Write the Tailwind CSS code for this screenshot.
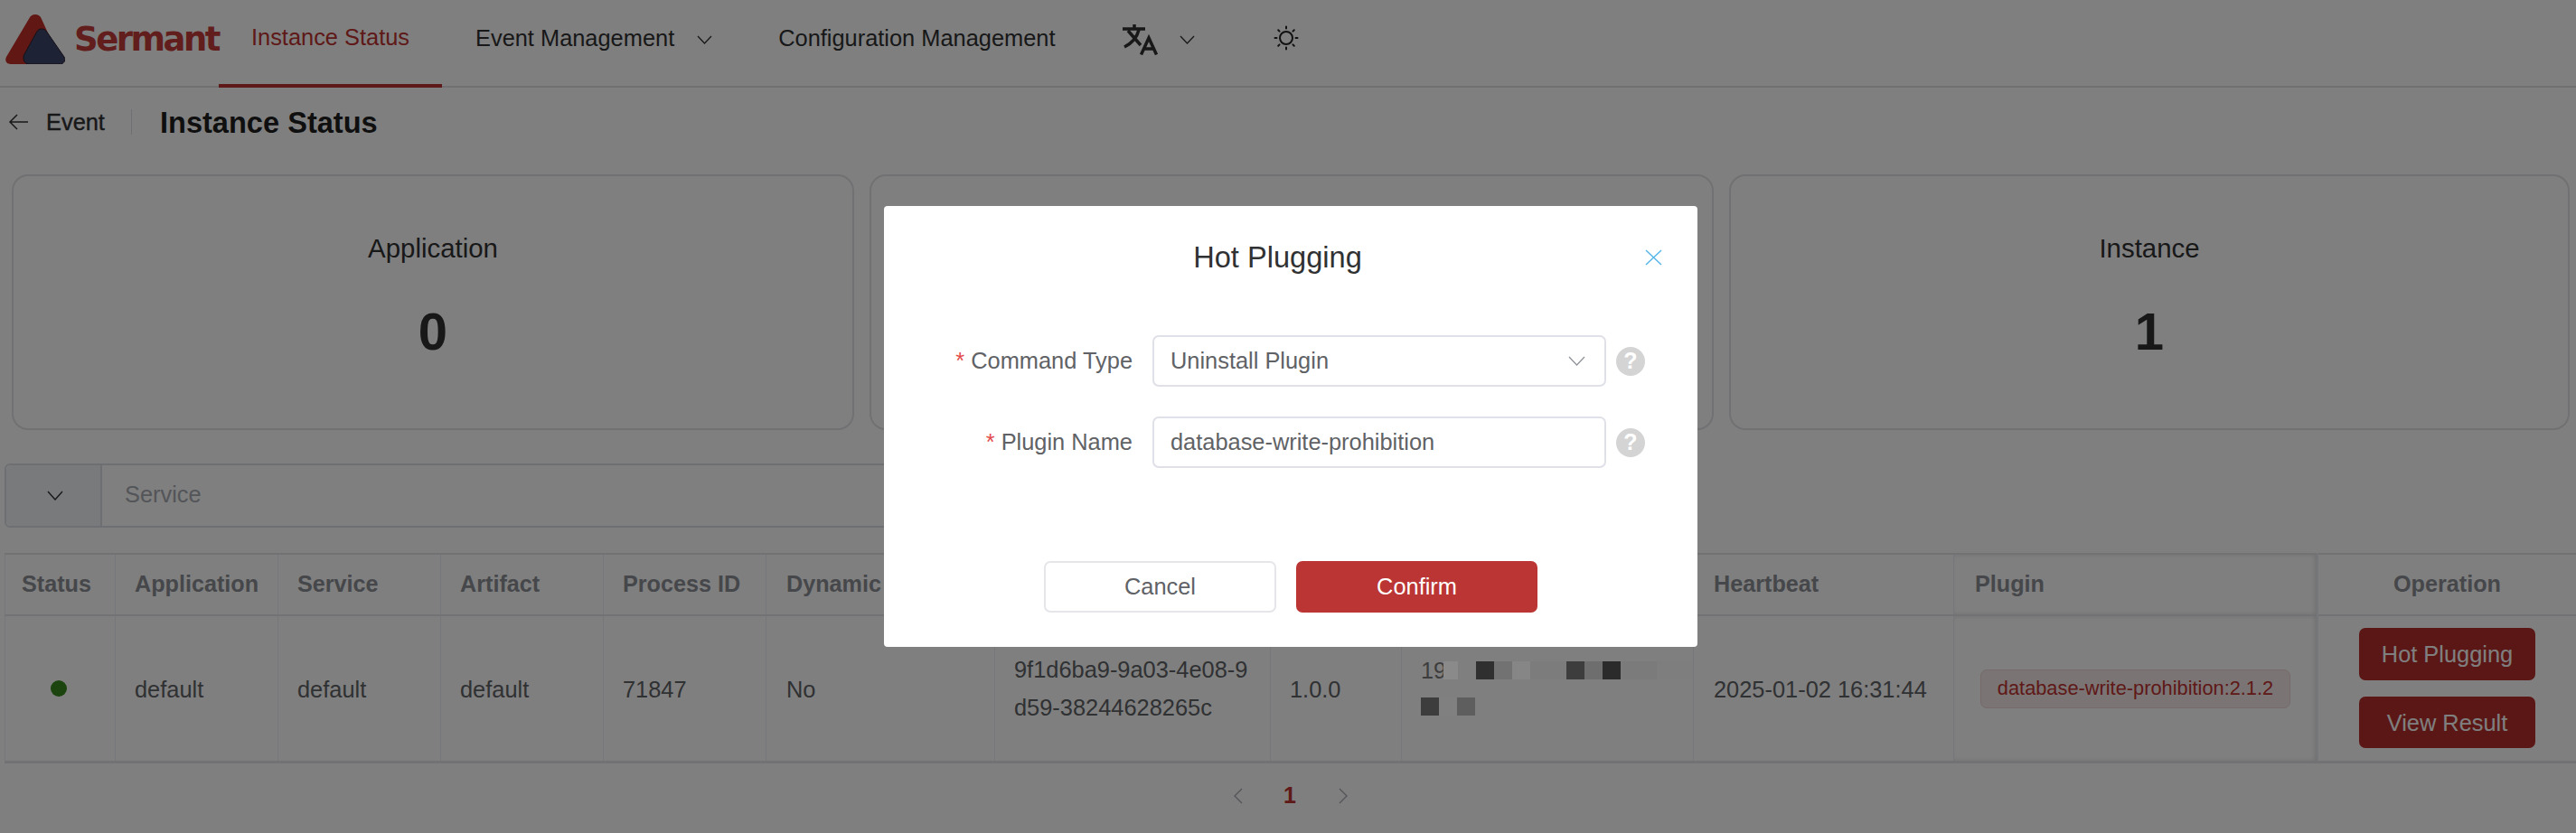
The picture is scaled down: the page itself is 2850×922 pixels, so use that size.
<!DOCTYPE html>
<html lang="en">
<head>
<meta charset="utf-8">
<title>Sermant</title>
<script src="https://cdn.jsdelivr.net/npm/@tailwindcss/browser@4"></script>
</head>
<body class="bg-white font-['Liberation_Sans',Arial,sans-serif] text-[25.4px] text-[#303133] overflow-hidden">
<div class="relative w-[2850px] h-[922px] overflow-hidden">

  <!-- Top navigation -->
  <header class="flex items-stretch h-[97px] border-b-2 border-[#e0e0e6]">
    <div class="flex w-[242px] shrink-0 pl-[6px] pt-[16px] gap-[10px]">
      <svg class="w-[66px] h-[55px] shrink-0" viewBox="0 0 66 55">
        <path d="M33 0c-3 0-5 1.500-6.500 4L1 47c-2 4 0 8 5 8h28L50 27 39.500 4C38 1.500 36 0 33 0z" fill="#c22f28"/>
        <path d="M40 16c-2.500 0-4 1-5.500 3.500L21 44c-2.500 4-.5 11 5 11h34c5 0 7-4.500 5-8L46 19.500C44.500 17 42.500 16 40 16z" fill="#3a4468" stroke="#2a1f30" stroke-width="1"/>
      </svg>
      <span class="font-['DejaVu_Sans',sans-serif] font-bold text-[#c43c38] text-[37px] leading-[44px] mt-[6px] tracking-[-2.5px] whitespace-nowrap">Sermant</span>
    </div>
    <div class="relative flex items-center justify-center w-[247px] shrink-0 text-[#bd3330] border-b-[4px] border-[#bd3330] mb-[-2px] pb-[10px]">Instance Status</div>
    <div class="flex items-center ml-[37px] pb-[10px] whitespace-nowrap">Event Management
      <svg class="w-[17px] h-[10px] ml-[25px] mt-[2px]" viewBox="0 0 17 10" fill="none" stroke="#303133" stroke-width="1.300"><path d="M1 1l7.500 8L16 1"/></svg>
    </div>
    <div class="flex items-center ml-[73px] pb-[10px] whitespace-nowrap">Configuration Management</div>
    <div class="flex items-center ml-[75px] pb-[10px]">
      <svg class="w-[39px] h-[34px] mt-[2px]" viewBox="0 0 39 34" fill="none" stroke="#303133" stroke-width="3.500">
        <path d="M0 5H25M13 0v5M6 7L20 23M18 6C16 14 10 21 2 25"/>
        <path d="M20.500 33.500L29 15l8.500 18.500M23.500 27h11"/>
      </svg>
      <svg class="w-[17px] h-[10px] ml-[24px] mt-[2px]" viewBox="0 0 17 10" fill="none" stroke="#303133" stroke-width="1.300"><path d="M1 1l7.500 8L16 1"/></svg>
    </div>
    <div class="flex items-center ml-[87px] pb-[12px]">
      <svg class="w-[28px] h-[28px]" viewBox="0 0 28 28" fill="none" stroke="#222" stroke-width="2" stroke-linecap="round">
        <circle cx="14" cy="14" r="7"/>
        <path d="M14 1.500v2M14 24.500v2M1.500 14h2M24.500 14h2M5.200 5.200l1.400 1.400M21.400 21.400l1.400 1.400M22.800 5.200l-1.400 1.400M6.600 21.400l-1.400 1.400"/>
      </svg>
    </div>
  </header>

  <!-- Breadcrumb -->
  <div class="flex items-center h-[76px] pl-[9px]">
    <svg class="w-[22px] h-[18px] shrink-0" viewBox="0 0 22 18" fill="none" stroke="#303133" stroke-width="1.500"><path d="M10 1L2 9l8 8M2 9h20"/></svg>
    <span class="ml-[20px] [-webkit-text-stroke:0.4px_#303133]">Event</span>
    <span class="w-px h-[28px] bg-[#dcdfe6] ml-[29px]"></span>
    <span class="ml-[31px] mt-[2px] font-bold text-[32.6px] text-[#1f1f1f]">Instance Status</span>
  </div>

  <!-- Summary cards -->
  <div class="grid grid-cols-[932px_934px_930px] gap-x-[17px] ml-[13px] mt-[20px]">
    <div class="h-[283px] border-2 border-[#e2e2e6] rounded-[18px] flex flex-col items-center pt-[63px]">
      <div class="text-[29.4px] leading-[34px]">Application</div>
      <div class="mt-[42px] text-[58px] leading-[66px] font-bold">0</div>
    </div>
    <div class="h-[283px] border-2 border-[#e2e2e6] rounded-[18px]"></div>
    <div class="h-[283px] border-2 border-[#e2e2e6] rounded-[18px] flex flex-col items-center pt-[63px]">
      <div class="text-[29.4px] leading-[34px]">Instance</div>
      <div class="mt-[42px] text-[58px] leading-[66px] font-bold">1</div>
    </div>
  </div>

  <!-- Search bar -->
  <div class="flex h-[71px] w-[1400px] ml-[5px] mt-[37px] border-2 border-[#dcdfe6] rounded-[6px]">
    <div class="flex items-center justify-center w-[106px] bg-[#f0f4f9] border-r-2 border-[#dcdfe6] rounded-l-[6px] pl-[4px]">
      <svg class="w-[18px] h-[11px]" viewBox="0 0 18 11" fill="none" stroke="#303133" stroke-width="1.400"><path d="M1 1l8 9 8-9"/></svg>
    </div>
    <div class="flex items-center pl-[25px] pb-[2px] text-[#a8abb2]">Service</div>
  </div>

  <!-- Table -->
  <table class="table-fixed w-[2845px] ml-[5px] mt-[28px] border-collapse text-[#606266]">
    <colgroup>
      <col class="w-[122px]"><col class="w-[180px]"><col class="w-[180px]"><col class="w-[180px]"><col class="w-[180px]"><col class="w-[253px]"><col class="w-[305px]"><col class="w-[145px]"><col class="w-[323px]"><col class="w-[288px]"><col class="w-[402px]"><col class="w-[287px]">
    </colgroup>
    <thead>
      <tr class="h-[68px] border-t-2 border-b-2 border-[#e4e4ea] text-left font-bold text-[25.2px] text-[#8c8f95]">
        <th class="pl-[18px] border-x border-[#ebeef5]">Status</th>
        <th class="pl-[21px] border-r border-[#ebeef5]">Application</th>
        <th class="pl-[21px] border-r border-[#ebeef5]">Service</th>
        <th class="pl-[21px] border-r border-[#ebeef5]">Artifact</th>
        <th class="pl-[21px] border-r border-[#ebeef5]">Process ID</th>
        <th class="pl-[22px] border-r border-[#ebeef5]">Dynamic</th>
        <th class="border-r border-[#ebeef5]"></th>
        <th class="border-r border-[#ebeef5]"></th>
        <th class="border-r border-[#ebeef5]"></th>
        <th class="pl-[22px] border-r border-[#ebeef5]">Heartbeat</th>
        <th class="pl-[23px] border-r-2 border-[#ebeef5] shadow-[-2px_0_5px_rgba(0,0,0,0.12)_inset]">Plugin</th>
        <th class="text-center">Operation</th>
      </tr>
    </thead>
    <tbody>
      <tr class="h-[162px] border-b-[3px] border-[#e4e4ea]">
        <td class="pr-[4px] border-x border-[#ebeef5]"><span class="block w-[18px] h-[18px] mx-auto rounded-full bg-[#36891e]"></span></td>
        <td class="pl-[21px] pt-[2px] border-r border-[#ebeef5]">default</td>
        <td class="pl-[21px] pt-[2px] border-r border-[#ebeef5]">default</td>
        <td class="pl-[21px] pt-[2px] border-r border-[#ebeef5]">default</td>
        <td class="pl-[21px] pt-[2px] border-r border-[#ebeef5]">71847</td>
        <td class="pl-[22px] pt-[2px] border-r border-[#ebeef5]">No</td>
        <td class="pl-[21px] pr-[18px] border-r border-[#ebeef5] leading-[42px] break-all">9f1d6ba9-9a03-4e08-9d59-38244628265c</td>
        <td class="pl-[21px] pt-[2px] border-r border-[#ebeef5]">1.0.0</td>
        <td class="pl-[21px] border-r border-[#ebeef5]">
          <div class="flex flex-col gap-[20px] relative z-20">
            <div class="flex items-center h-[20px]"><span class="w-[25px] text-[#3d3d3d] leading-[20px] whitespace-nowrap">19</span><i class="w-[16px] h-[20px] bg-[#8a8a8a]"></i><i class="w-[20px] h-[20px] bg-[#7f7f7f]"></i><i class="w-[20px] h-[20px] bg-[#2f2f30]"></i><i class="w-[20px] h-[20px] bg-[#727272]"></i><i class="w-[20px] h-[20px] bg-[#868686]"></i><i class="w-[40px] h-[20px] bg-[#7c7c7c]"></i><i class="w-[20px] h-[20px] bg-[#3d3d3d]"></i><i class="w-[20px] h-[20px] bg-[#6e6e6e]"></i><i class="w-[20px] h-[20px] bg-[#2b2b2b]"></i><i class="w-[40px] h-[20px] bg-[#7b7b7b]"></i><i class="w-[40px] h-[20px] bg-[#7e7e7e]"></i></div>
            <div class="flex h-[20px]"><i class="w-[20px] h-[20px] bg-[#3d3d3d]"></i><i class="w-[20px] h-[20px] bg-[#808080]"></i><i class="w-[20px] h-[20px] bg-[#5e5e5e]"></i></div>
          </div>
        </td>
        <td class="pl-[22px] pt-[2px] border-r border-[#ebeef5] whitespace-nowrap">2025-01-02 16:31:44</td>
        <td class="pl-[29px] pt-[2px] border-r-2 border-[#ebeef5] shadow-[-2px_0_5px_rgba(0,0,0,0.12)_inset]">
          <span class="inline-flex items-center justify-center h-[43px] w-[343px] bg-[#f7e8e8] border border-[#ecd5d5] rounded-[7px] text-[#bd3330] text-[21.8px] whitespace-nowrap">database-write-prohibition:2.1.2</span>
        </td>
        <td>
          <div class="flex flex-col items-center gap-[18px]">
            <button class="w-[195px] h-[58px] rounded-[7px] bg-[#b62e2b] text-white">Hot Plugging</button>
            <button class="w-[195px] h-[57px] rounded-[7px] bg-[#b62e2b] text-white">View Result</button>
          </div>
        </td>
      </tr>
    </tbody>
  </table>

  <!-- Pagination -->
  <div class="flex items-center justify-center w-[2850px] h-[32px] mt-[20px] pl-[6px]">
    <svg class="w-[11px] h-[18px]" viewBox="0 0 11 18" fill="none" stroke="#a8abb2" stroke-width="1.400"><path d="M10 1L2 9l8 8"/></svg>
    <span class="ml-[45px] mr-[47px] font-bold text-[#bd3330] text-[25px]">1</span>
    <svg class="w-[11px] h-[18px]" viewBox="0 0 11 18" fill="none" stroke="#a8abb2" stroke-width="1.400"><path d="M1 1l8 8-8 8"/></svg>
  </div>

  <!-- Modal overlay -->
  <div class="absolute inset-0 z-10 bg-black/50"></div>

  <!-- Modal -->
  <div class="absolute z-30 left-[978px] top-[228px] w-[900px] h-[488px] bg-white rounded-[4px] text-[#606266]">
    <div class="relative flex justify-center pt-[36px] pr-[29px] text-[32.6px] leading-[42px] text-[#303133]">
      Hot Plugging
      <svg class="absolute left-[842px] top-[48px] w-[19px] h-[18px]" viewBox="0 0 19 18" fill="none" stroke="#58b7e8" stroke-width="1.500"><path d="M1 1l17 16M18 1L1 17"/></svg>
    </div>
    <div class="grid grid-cols-[264px_502px_32px] gap-x-[11px] gap-y-[33px] items-center ml-[22px] mt-[65px]">
      <label class="text-right pr-[11px]"><span class="text-[#e34c4c] mr-[7px]">*</span>Command Type</label>
      <div class="flex items-center justify-between h-[57px] border-2 border-[#e0e0e8] rounded-[7px] pl-[18px] pr-[21px]">
        <span>Uninstall Plugin</span>
        <svg class="w-[19px] h-[11px]" viewBox="0 0 19 11" fill="none" stroke="#909399" stroke-width="1.300"><path d="M1 1l8.500 9L18 1"/></svg>
      </div>
      <span class="flex items-center justify-center w-[32px] h-[32px] rounded-full bg-[#d4d4d4] text-white font-bold text-[25px]">?</span>
      <label class="text-right pr-[11px]"><span class="text-[#e34c4c] mr-[7px]">*</span>Plugin Name</label>
      <div class="flex items-center h-[57px] border-2 border-[#e0e0e8] rounded-[7px] pl-[18px]">database-write-prohibition</div>
      <span class="flex items-center justify-center w-[32px] h-[32px] rounded-full bg-[#d4d4d4] text-white font-bold text-[25px]">?</span>
    </div>
    <div class="flex gap-[22px] ml-[177px] mt-[103px]">
      <button class="w-[257px] h-[57px] border-2 border-[#e6e6ea] rounded-[7px] bg-white text-[#606266]">Cancel</button>
      <button class="w-[267px] h-[57px] rounded-[7px] bg-[#ba3533] text-white">Confirm</button>
    </div>
  </div>
</div>
</body>
</html>
